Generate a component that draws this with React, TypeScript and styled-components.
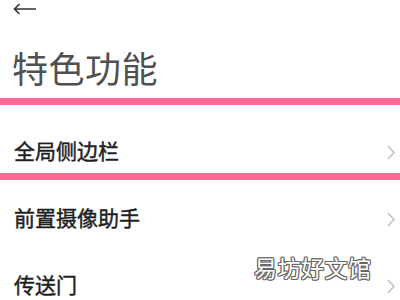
import styled, { createGlobalStyle } from 'styled-components';

const GlobalStyle = createGlobalStyle`
  html, body {
    margin: 0;
    padding: 0;
    background: #ffffff;
  }
  body {
    font-family: "Noto Sans CJK SC", "Noto Sans", sans-serif;
  }
`;

const Screen = styled.div`
  position: relative;
  width: 400px;
  height: 300px;
  overflow: hidden;
  background: #fff;
`;

const TopBar = styled.div`
  height: 18px;
  display: flex;
  align-items: center;
  padding-left: 13px;

  svg {
    width: 24px;
    height: 12px;
  }
`;

const Title = styled.h1`
  margin: 0;
  padding: 27px 0 26px 12px;
  font-size: 36px;
  line-height: 45px;
  font-weight: 400;
  color: #505050;
  letter-spacing: 0.5px;
`;

const List = styled.ul`
  margin: 0;
  padding: 0;
  list-style: none;
`;

const Row = styled.li`
  height: 67px;
  display: flex;
  align-items: center;
  justify-content: space-between;
  padding: 0 5px 0 14px;
  font-size: 21px;
  font-weight: 400;
  color: #1e1e1e;
  -webkit-text-stroke: 0.45px #1e1e1e;

  svg {
    width: 8px;
    height: 15px;
    margin-top: 5px;
  }
`;

// pink highlight strokes drawn over the screenshot
const Marker = styled.div<{ $top: number }>`
  position: absolute;
  left: 0;
  right: 0;
  top: ${p => p.$top}px;
  height: 7px;
  background: #fd6b94;
`;

const Watermark = styled.div`
  position: absolute;
  left: 254px;
  top: 250px;
  font-size: 23px;
  font-weight: 400;
  color: #ffffff;
  letter-spacing: 0.5px;
  text-shadow:
    1px 0 0 #666, -1px 0 0 #666, 0 1px 0 #666, 0 -1px 0 #666,
    1px 1px 0 #666, -1px -1px 0 #666, 1px -1px 0 #666, -1px 1px 0 #666;
`;

const Chevron = () => (
    <svg viewBox="0 0 8 15" fill="none">
        <path d="M1 1 L7 7.5 L1 14" stroke="#bcbcbc" strokeWidth="1.4" />
    </svg>
);

const items = ['全局侧边栏', '前置摄像助手', '传送门'];

const App = () => {
    return <Screen>
        <GlobalStyle />
        <TopBar>
            <svg viewBox="0 0 24 12" fill="none">
                <path d="M23 6 H1.5 M6.5 1 L1.5 6 L6.5 11" stroke="#333" strokeWidth="1.6" />
            </svg>
        </TopBar>
        <Title>特色功能</Title>
        <List>
            {items.map(name => (
                <Row key={name}>
                    <span>{name}</span>
                    <Chevron />
                </Row>
            ))}
        </List>
        <Marker $top={98} />
        <Marker $top={173} />
        <Watermark>易坊好文馆</Watermark>
    </Screen>
}

export default App;
